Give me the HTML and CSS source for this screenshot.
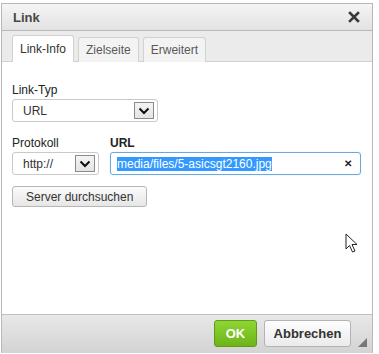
FILE: index.html
```html
<!DOCTYPE html>
<html lang="de">
<head>
  <meta charset="UTF-8">
  <title>Link</title>
  <link rel="stylesheet" href="styles.css">
</head>
<body>
  <div class="dialog">
    <!-- Titelleiste -->
    <div class="dialog-title">
      <span>Link</span>
      <svg class="close-icon" width="12" height="12" viewBox="0 0 12 12">
        <path d="M2 2 L10 10 M10 2 L2 10" stroke="#3a3a3a" stroke-width="2.6" stroke-linecap="square"/>
      </svg>
    </div>

    <!-- Reiter -->
    <div class="tabs">
      <div class="tab active">Link-Info</div>
      <div class="tab">Zielseite</div>
      <div class="tab">Erweitert</div>
    </div>

    <!-- Inhalt -->
    <div class="dialog-body">
      <div class="field">
        <label>Link-Typ</label>
        <div class="select select-type">
          <span>URL</span>
          <span class="select-arrow"><svg width="12" height="8" viewBox="0 0 12 8"><path d="M1.5 1.5 L6 6 L10.5 1.5" fill="none" stroke="#111" stroke-width="2"/></svg></span>
        </div>
      </div>

      <div class="row">
        <div class="field">
          <label>Protokoll</label>
          <div class="select select-proto">
            <span>http://</span>
            <span class="select-arrow"><svg width="12" height="8" viewBox="0 0 12 8"><path d="M1.5 1.5 L6 6 L10.5 1.5" fill="none" stroke="#111" stroke-width="2"/></svg></span>
          </div>
        </div>
        <div class="field field-url">
          <label class="bold">URL</label>
          <div class="input-url">
            <span class="selected">media/files/5-asicsgt2160.jpg</span>
            <span class="clear">&#x2715;</span>
          </div>
        </div>
      </div>

      <button class="btn-browse">Server durchsuchen</button>
    </div>

    <!-- Fußleiste -->
    <div class="dialog-footer">
      <button class="btn btn-ok">OK</button>
      <button class="btn btn-cancel">Abbrechen</button>
      <span class="resize"></span>
    </div>

    <svg class="cursor" width="14" height="22" viewBox="0 0 14 22">
      <path d="M1 1 L1 16 L4.5 12.5 L7.5 19 L10 18 L7 11.5 L12 11.5 Z" fill="#fff" stroke="#222" stroke-width="1" stroke-linejoin="round"/>
    </svg>
  </div>
</body>
</html>
```

FILE: styles.css
```css
body {
  margin: 0;
  background: #fff;
  font-family: "Liberation Sans", Arial, sans-serif;
  font-size: 12px;
  color: #333;
}

.dialog {
  position: relative;
  width: 370px;
  height: 349px;
  margin: 3px 0 0 1px;
  border: 1px solid #b8b8b8;
  border-bottom: none;
  display: flex;
  flex-direction: column;
  background: #fff;
}

.dialog-title {
  height: 26px;
  display: flex;
  align-items: center;
  justify-content: space-between;
  padding: 0 11px 0 11px;
  background: linear-gradient(#f5f5f5, #e2e2e2);
  border-bottom: 1px solid #b9b9b9;
  font-size: 13px;
  font-weight: bold;
  color: #474747;
}

.close-icon {
  margin-right: 1px;
}

.tabs {
  height: 30px;
  display: flex;
  align-items: flex-end;
  gap: 4px;
  padding-left: 10px;
  background: #ebebeb;
  border-bottom: 1px solid #d1d1d1;
}

.tab {
  height: 24px;
  line-height: 24px;
  padding: 0 7px;
  margin-bottom: -1px;
  border: 1px solid #d1d1d1;
  border-bottom: none;
  border-radius: 3px 3px 0 0;
  background: #f3f3f3;
  color: #595959;
}

.tab.active {
  height: 26px;
  line-height: 27px;
  background: #fff;
  color: #333;
}

.dialog-body {
  flex: 1;
  padding: 21px 10px 0 10px;
}

.field label {
  display: block;
  height: 15px;
  line-height: 15px;
  margin-bottom: 1px;
  color: #222;
}

.field label.bold {
  font-weight: bold;
}

.select {
  display: flex;
  align-items: center;
  justify-content: space-between;
  height: 21px;
  padding: 0 3px 0 10px;
  border: 1px solid #c9c9c9;
  border-radius: 3px;
  background: #fff;
}

.select-type {
  width: 131px;
}

.select-proto {
  width: 72px;
}

.select-arrow {
  display: flex;
  align-items: center;
  justify-content: center;
  width: 18px;
  height: 15px;
  border: 1px solid #8a8a8a;
  background: linear-gradient(#f4f4f4, #e4e4e4);
}

.row {
  display: flex;
  gap: 11px;
  margin-top: 14px;
}

.input-url {
  display: flex;
  align-items: center;
  justify-content: space-between;
  width: 235px;
  height: 21px;
  padding: 0 8px 0 6px;
  border: 1px solid #6aa9e0;
  border-radius: 3px;
  box-shadow: 0 0 1px #9fcaf0;
}

.selected {
  background: #3399ff;
  color: #fff;
}

.clear {
  font-size: 10px;
  font-weight: bold;
  color: #222;
}

.btn-browse {
  display: block;
  margin-top: 11px;
  height: 21px;
  padding: 0 13px;
  font-family: inherit;
  font-size: 12px;
  color: #333;
  border: 1px solid #b6b6b6;
  border-radius: 3px;
  background: linear-gradient(#fbfbfb, #e6e6e6);
}

.dialog-footer {
  height: 39px;
  display: flex;
  align-items: flex-start;
  justify-content: flex-end;
  gap: 7px;
  padding: 5px 21px 0 0;
  box-sizing: border-box;
  border-top: 1px solid #bfbfbf;
  background: linear-gradient(#e8e8e8, #d3d3d3);
  position: relative;
}

.btn {
  height: 27px;
  font-family: inherit;
  font-size: 13px;
  font-weight: bold;
  border-radius: 3px;
}

.btn-ok {
  width: 43px;
  color: #fff;
  border: 1px solid #5f9c12;
  background: linear-gradient(#8fd534, #6cb41a);
}

.btn-cancel {
  width: 87px;
  color: #333;
  border: 1px solid #b3b3b3;
  background: linear-gradient(#fdfdfd, #ebebeb);
}

.resize {
  position: absolute;
  right: 5px;
  bottom: 6px;
  width: 0;
  height: 0;
  border-left: 9px solid transparent;
  border-bottom: 9px solid #777;
}

.cursor {
  position: absolute;
  left: 343px;
  top: 229px;
}
```
